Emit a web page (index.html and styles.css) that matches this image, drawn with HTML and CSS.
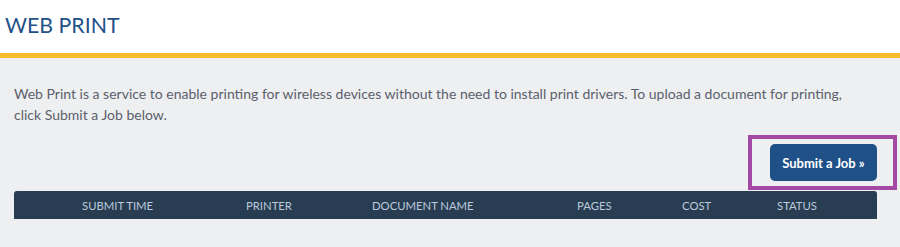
FILE: index.html
```html
<!DOCTYPE html>
<html lang="en">
<head>
    <meta charset="UTF-8">
    <meta name="viewport" content="width=device-width, initial-scale=1.0">
    <title>Web Print</title>
    <link rel="stylesheet" href="styles.css">
</head>
<body>
    <div class="top">
        <h1>WEB PRINT</h1>
    </div>
    <div class="content">
        <p class="intro">Web Print is a service to enable printing for wireless devices without the need to install print drivers. To upload a document for printing, click Submit a Job below.</p>
        <div class="actions">
            <div class="highlight">
                <button class="submit">Submit a Job &raquo;</button>
            </div>
        </div>
        <div class="jobs-head">
            <div>SUBMIT TIME</div>
            <div>PRINTER</div>
            <div>DOCUMENT NAME</div>
            <div>PAGES</div>
            <div>COST</div>
            <div>STATUS</div>
        </div>
    </div>
</body>
</html>
```

FILE: styles.css
```css
body {
    margin: 0;
    font-family: Lato, "Liberation Sans", sans-serif;
    background-color: #eeeff1;
}
.top {
    background-color: #fff;
    height: 53px;
    border-bottom: 5px solid #f7bd2b;
}
.top h1 {
    margin: 0;
    padding: 12px 0 0 5px;
    font-size: 21.3px;
    font-weight: normal;
    line-height: 26px;
    color: #1f5088;
}
.content {
    padding: 0 0 0 14px;
}
.intro {
    margin: 25px 0 0 0;
    font-size: 14px;
    line-height: 21px;
    color: #5b606c;
    padding-right: 30px;
}
.actions {
    display: flex;
    justify-content: flex-end;
    margin-top: 10px;
    padding-right: 3px;
}
.highlight {
    border: 4px solid #a349a4;
    padding: 5px 16px 5px 18px;
}
.submit {
    display: block;
    width: 107px;
    height: 37px;
    border: none;
    border-radius: 5px;
    background-color: #1f5088;
    color: #fff;
    font-family: Lato, "Liberation Sans", sans-serif;
    font-weight: bold;
    font-size: 13px;
    padding: 0;
}
.jobs-head {
    display: grid;
    grid-template-columns: 164px 126px 205px 105px 95px 1fr;
    width: 863px;
    box-sizing: border-box;
    margin-top: 1px;
    padding-left: 68px;
    height: 28px;
    align-items: center;
    background-color: #283d52;
    border-radius: 3px 3px 0 0;
    color: #bccadb;
    font-size: 11.3px;
}
```
